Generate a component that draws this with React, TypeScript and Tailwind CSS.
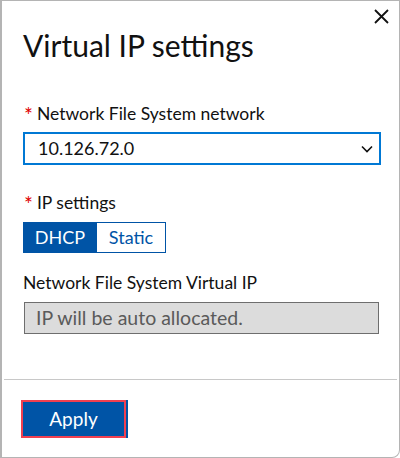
import React from "react";

export default function App() {
  return (
    <div
      className="relative w-[400px] h-[458px] bg-white border-l-2 border-t border-r border-b border-[#b4b4b4] rounded-br-[8px] flex flex-col overflow-hidden"
      style={{ fontFamily: 'Lato, "Noto Sans", sans-serif' }}
    >
      <button className="absolute right-[8px] top-[5px] w-[20px] h-[20px] flex items-center justify-center text-black">
        <svg width="15" height="15" viewBox="0 0 15 15">
          <path d="M1 1 L14 14 M14 1 L1 14" stroke="#111" strokeWidth="1.8" />
        </svg>
      </button>
      <div className="flex-1 flex flex-col px-[21px]">
        <h1 className="mt-[25px] text-[30px] leading-[38px] text-[#111]">Virtual IP settings</h1>
        <div className="mt-[38px] flex items-center text-[17.5px] leading-[22px] text-[#111]">
          <span className="text-[#e00000] mr-[4px] ml-[1px] text-[21px] leading-[22px] pt-[2px]">*</span>
          <span>Network File System network</span>
        </div>
        <div className="mt-[6px] h-[33px] w-[358px] border-2 border-[#0078d4] flex items-center justify-between pl-[13px] pr-[6px] text-[18px] text-[#111]">
          <span>10.126.72.0</span>
          <svg width="12" height="8" viewBox="0 0 12 8">
            <path d="M1 1.5 L6 6.5 L11 1.5" stroke="#111" strokeWidth="1.6" fill="none" />
          </svg>
        </div>
        <div className="mt-[26px] flex items-center text-[17.5px] leading-[22px] text-[#111]">
          <span className="text-[#e00000] mr-[4px] ml-[1px] text-[21px] leading-[22px] pt-[2px]">*</span>
          <span>IP settings</span>
        </div>
        <div className="mt-[7px] flex h-[31px] w-fit text-[18px]">
          <div className="bg-[#0054a6] text-white w-[74px] flex items-center justify-center">DHCP</div>
          <div className="border border-[#0054a6] border-l-0 text-[#0054a6] w-[69px] flex items-center justify-center">Static</div>
        </div>
        <div className="mt-[19px] text-[17.5px] leading-[22px] text-[#111]">Network File System Virtual IP</div>
        <div className="mt-[8px] ml-[1px] h-[32px] w-[355px] bg-[#dcdcdc] border border-[#6e6e6e] flex items-center pl-[11px] text-[19.5px] text-[#5a5a5a]">
          IP will be auto allocated.
        </div>
      </div>
      <div className="border-t border-[#c8c8c8] mx-[2px] h-[78px] flex items-start pt-[20px] px-[17px]">
        <button className="h-[38px] w-[105px] bg-[#0054a6] border-2 border-[#f04050] text-white text-[19px] flex items-center justify-center shadow-[2px_0_0_#0054a6]">
          Apply
        </button>
      </div>
    </div>
  );
}
